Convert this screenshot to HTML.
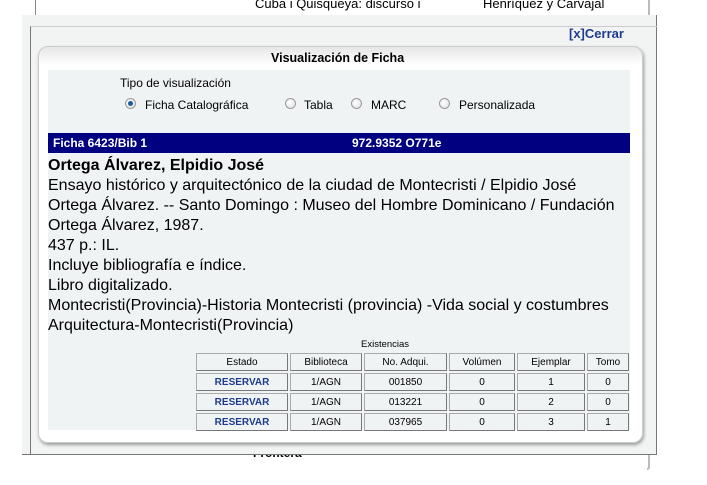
<!DOCTYPE html>
<html><head><meta charset="utf-8"><style>
*{margin:0;padding:0;box-sizing:border-box}
body{width:707px;height:485px;background:#fff;position:relative;overflow:hidden;font-family:"Liberation Sans",Arial,sans-serif;color:#000}
.abs{position:absolute}
.t{font-family:"Liberation Sans",sans-serif;font-size:12px;white-space:nowrap}
.radio{display:inline-block;width:11px;height:11px;border-radius:50%;border:1px solid #999;background:radial-gradient(circle at 40% 40%,#fff,#ddd);position:absolute}
.radio.on::after{content:"";position:absolute;left:2px;top:2px;width:5px;height:5px;border-radius:50%;background:#1d5c9a}
table{border-collapse:separate;border-spacing:2px;font-family:"Liberation Sans",sans-serif;font-size:10px}
td{border:1px solid #777;border-left-color:#aaa;border-top-color:#aaa;text-align:center;height:18px;padding:0}
td.r{color:#1f3b8f;font-weight:bold}
</style></head><body>
<div class="abs" style="left:35px;top:0;width:1px;height:20px;background:#888"></div>
<div class="abs" style="left:647px;top:0;width:3px;height:470px;border-right:2px solid #bbb;border-bottom:2px solid #bbb;border-bottom-right-radius:4px"></div>
<div class="abs t" style="left:255px;top:-4px;font-size:13px">Cuba i Quisqueya: discurso i</div>
<div class="abs t" style="left:483px;top:-4px;font-size:13px">Henríquez y Carvajal</div>
<div class="abs t" style="left:253px;top:446px;font-size:12px;font-weight:bold">Frontera</div>

<div class="abs" style="left:22px;top:15px;width:635px;height:440px;background:#f2f4f4;border-bottom:1px solid #777;border-right:1px solid #777"></div>
<div class="abs" style="left:30px;top:26px;width:627px;height:429px;border-left:1px solid #777;border-top:1px solid #ccc"></div>
<div class="abs t" style="left:569px;top:26px;color:#1f3b8f;font-weight:bold;font-size:13px">[x]Cerrar</div>
<div class="abs" style="left:38px;top:46px;width:605px;height:397px;border-radius:10px;box-shadow:1px 2px 3px #999;border:1px solid #ccc;background:linear-gradient(#e6e6e6,#fff 18px)"></div>
<div class="abs t" style="left:271px;top:51px;font-weight:bold;font-size:12.5px">Visualización de Ficha</div>
<div class="abs" style="left:48px;top:70px;width:582px;height:360px;background:#f0f3f4"></div>
<div class="abs t" style="left:120px;top:76px">Tipo de visualización</div>
<span class="radio on" style="left:125px;top:98px"></span>
<div class="abs t" style="left:145px;top:98px">Ficha Catalográfica</div>
<span class="radio" style="left:285px;top:98px"></span>
<div class="abs t" style="left:304px;top:98px">Tabla</div>
<span class="radio" style="left:351px;top:98px"></span>
<div class="abs t" style="left:371px;top:98px">MARC</div>
<span class="radio" style="left:439px;top:98px"></span>
<div class="abs t" style="left:459px;top:98px">Personalizada</div>

<div class="abs" style="left:48px;top:133px;width:582px;height:20px;background:#000080"></div>
<div class="abs" style="left:53px;top:136px;color:#fff;font-weight:bold;font-size:12px">Ficha 6423/Bib 1</div>
<div class="abs" style="left:352px;top:136px;color:#fff;font-weight:bold;font-size:12px">972.9352 O771e</div>
<div class="abs" style="left:48px;top:156px;font-size:16px;line-height:20px;width:580px">
<b>Ortega Álvarez, Elpidio José</b><br>
Ensayo histórico y arquitectónico de la ciudad de Montecristi / Elpidio José<br>Ortega Álvarez. -- Santo Domingo : Museo del Hombre Dominicano / Fundación<br>Ortega Álvarez, 1987.<br>
437 p.: IL.<br>
Incluye bibliografía e índice.<br>
Libro digitalizado.<br>
Montecristi(Provincia)-Historia Montecristi (provincia) -Vida social y costumbres<br>Arquitectura-Montecristi(Provincia)</div>
<div class="abs t" style="left:361px;top:339px;font-size:9.5px">Existencias</div>
<table class="abs" style="left:194px;top:351px;width:437px">
<tr><td style="width:92px">Estado</td><td style="width:72px">Biblioteca</td><td style="width:83px">No. Adqui.</td><td style="width:66px">Volúmen</td><td style="width:68px">Ejemplar</td><td>Tomo</td></tr>
<tr><td class="r">RESERVAR</td><td>1/AGN</td><td>001850</td><td>0</td><td>1</td><td>0</td></tr>
<tr><td class="r">RESERVAR</td><td>1/AGN</td><td>013221</td><td>0</td><td>2</td><td>0</td></tr>
<tr><td class="r">RESERVAR</td><td>1/AGN</td><td>037965</td><td>0</td><td>3</td><td>1</td></tr>
</table>
</body></html>
